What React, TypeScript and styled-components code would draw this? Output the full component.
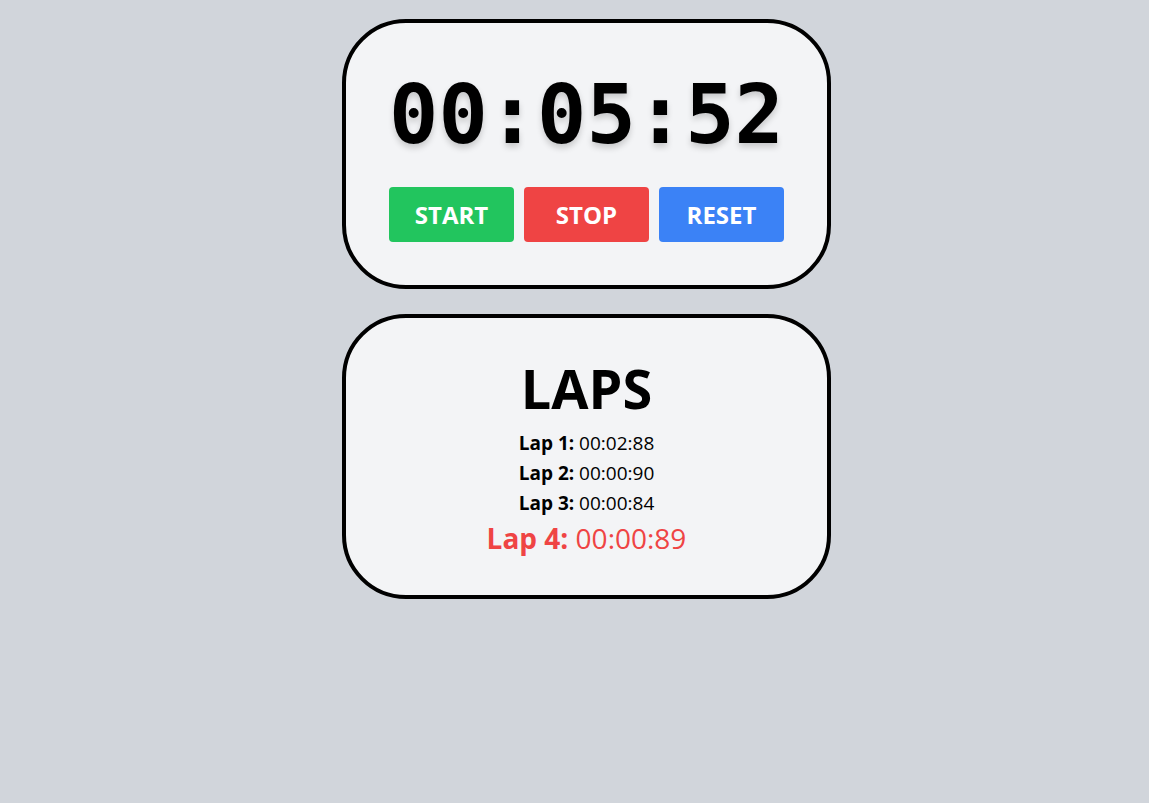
import React from "react";
import styled, { createGlobalStyle } from "styled-components";

const Global = createGlobalStyle`
  html, body { margin: 0; padding: 0; }
  body {
    background: #d1d5db;
    font-family: "Open Sans", "Noto Sans", sans-serif;
    color: #000;
  }
`;

const Page = styled.main`
  display: flex;
  flex-direction: column;
  align-items: center;
  gap: 25px;
  padding: 19px 0 0 24px;
  min-height: 100vh;
  box-sizing: border-box;
`;

const Card = styled.section<{ $pad: string }>`
  width: 489px;
  box-sizing: border-box;
  border: 4px solid #000;
  border-radius: 64px;
  background: #f3f4f6;
  padding: ${(p) => p.$pad};
  display: flex;
  flex-direction: column;
  align-items: center;
`;

const Clock = styled.div`
  font-family: "DejaVu Sans Mono", "Liberation Mono", monospace;
  font-weight: 700;
  font-size: 82px;
  line-height: 96px;
  font-variant-numeric: slashed-zero;
  text-shadow: 0 4px 6px rgba(0, 0, 0, 0.18);
`;

const Buttons = styled.div`
  display: flex;
  gap: 10px;
  margin-top: 24px;
`;

const Button = styled.button<{ $bg: string }>`
  width: 125px;
  height: 55px;
  border: none;
  border-radius: 4px;
  background: ${(p) => p.$bg};
  color: #fff;
  font-family: "Open Sans", "Noto Sans", sans-serif;
  font-weight: 700;
  font-size: 24px;
  cursor: pointer;
  padding: 0;
`;

const Title = styled.h2`
  margin: 2px 0 12px;
  font-size: 54px;
  line-height: 56px;
  font-weight: 700;
`;

const LapList = styled.ul`
  list-style: none;
  margin: 0;
  padding: 0;
  display: flex;
  flex-direction: column;
  align-items: center;
`;

const Lap = styled.li<{ $latest?: boolean }>`
  font-size: ${(p) => (p.$latest ? "28px" : "19px")};
  line-height: ${(p) => (p.$latest ? "40px" : "30px")};
  color: ${(p) => (p.$latest ? "#ef4444" : "#000")};
  b { font-weight: 700; }
`;

const laps = ["00:02:88", "00:00:90", "00:00:84", "00:00:89"];

export default function App() {
  return (
    <>
      <Global />
      <Page>
        <Card $pad="44px 0 43px">
          <Clock>00:05:52</Clock>
          <Buttons>
            <Button $bg="#22c55e">START</Button>
            <Button $bg="#ef4444">STOP</Button>
            <Button $bg="#3b82f6">RESET</Button>
          </Buttons>
        </Card>
        <Card $pad="40px 0 37px">
          <Title>LAPS</Title>
          <LapList>
            {laps.map((t, i) => (
              <Lap key={i} $latest={i === laps.length - 1}>
                <b>Lap {i + 1}:</b> {t}
              </Lap>
            ))}
          </LapList>
        </Card>
      </Page>
    </>
  );
}
